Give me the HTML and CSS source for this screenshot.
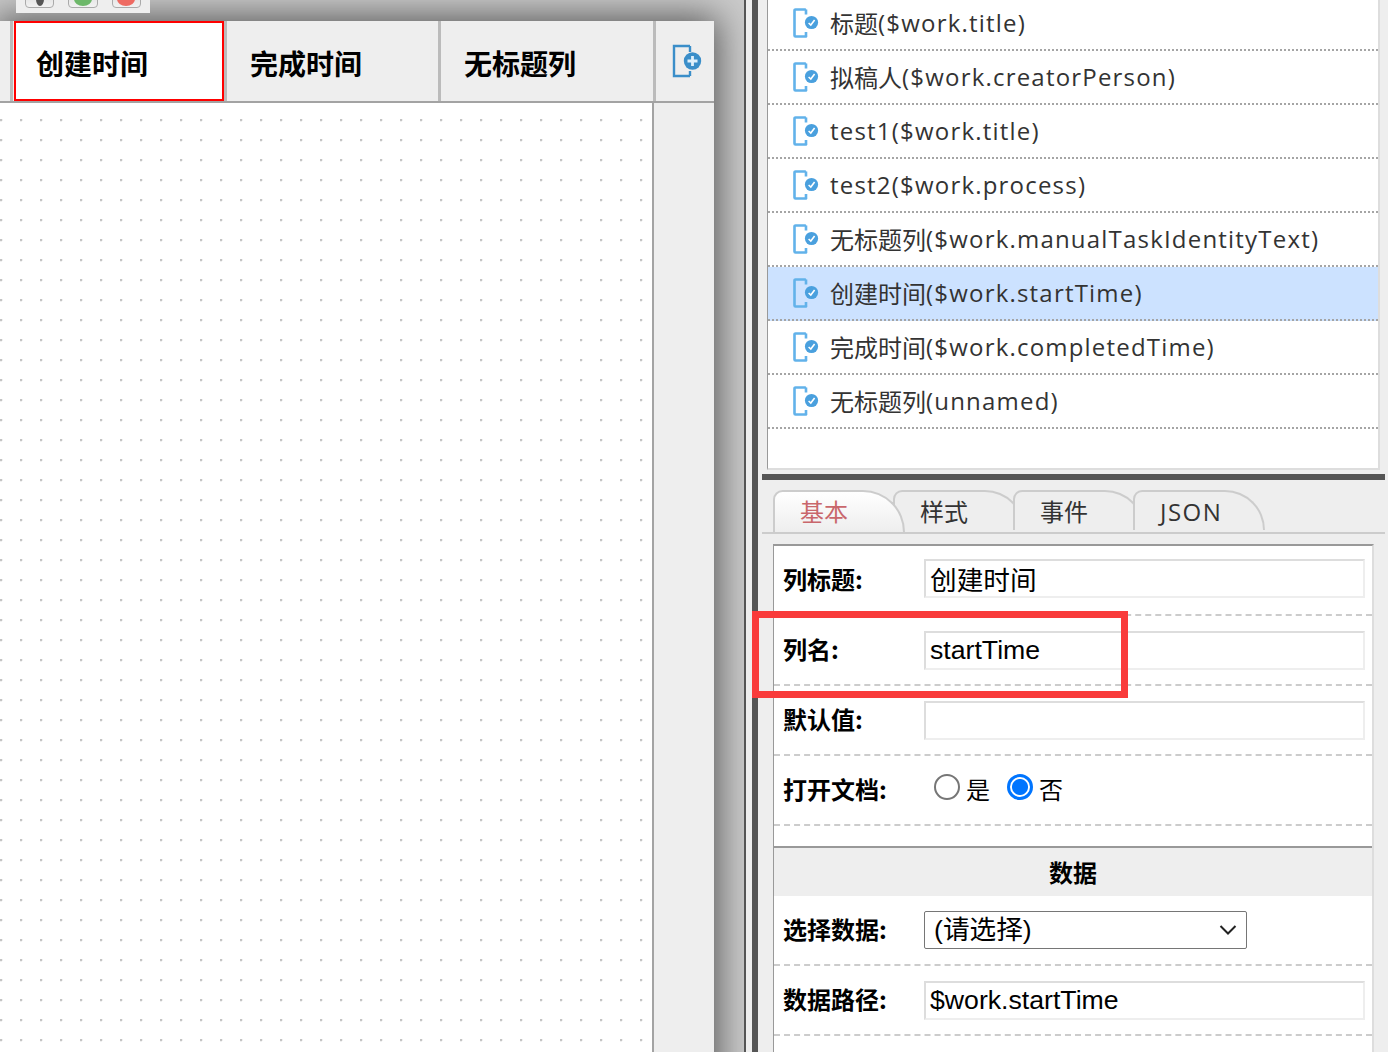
FILE: index.html
```html
<!DOCTYPE html>
<html lang="zh">
<head>
<meta charset="utf-8">
<title>视图设计</title>
<link rel="stylesheet" href="styles.css">
</head>
<body>
<svg class="defs" width="0" height="0" aria-hidden="true">
  <symbol id="doc" viewBox="0 0 27 30">
    <path d="M12 1.5H2.5a1 1 0 0 0-1 1v25a1 1 0 0 0 1 1H13" fill="none" stroke="#62b2ea" stroke-width="2.6" stroke-linecap="round"/>
    <path d="M13 1.5v5M13 24v4.5" fill="none" stroke="#62b2ea" stroke-width="2.6"/>
    <circle cx="18.5" cy="14.5" r="6.6" fill="#4aa0de"/>
    <path d="M15.6 15l2.2 2 3.8-5" fill="none" stroke="#fff" stroke-width="1.6"/>
  </symbol>
</svg>
<div class="app">
  <section class="stage">
    <div class="toolbar">
      <span class="tool"><i class="dot dot-dark"></i></span>
      <span class="tool"><i class="dot dot-green"></i></span>
      <span class="tool"><i class="dot dot-red"></i></span>
    </div>
    <div class="sheet">
      <div class="columns">
        <div class="column-stub"></div>
        <div class="column column-active">创建时间</div>
        <div class="column column-second">完成时间</div>
        <div class="column column-third">无标题列</div>
        <div class="column-add">
          <svg width="32" height="34" viewBox="0 0 32 34" aria-hidden="true">
            <path d="M18 2H2v30h16M18 2v6M18 27v5" fill="none" stroke="#3a8ec9" stroke-width="2.4"/>
            <circle cx="20.500" cy="17" r="8.700" fill="#3a8ec9"/>
            <path d="M15.500 17h10M20.500 12v10" stroke="#dff0fb" stroke-width="2.800"/>
          </svg>
        </div>
      </div>
      <div class="canvas-row">
        <div class="canvas"></div>
        <div class="canvas-side"></div>
      </div>
    </div>
  </section>
  <div class="rule"></div>
  <aside class="side">
    <ul class="tree">
      <li class="tree-item"><svg class="doc"><use href="#doc"/></svg>标题<span class="path">($work.title)</span></li>
      <li class="tree-item"><svg class="doc"><use href="#doc"/></svg>拟稿人<span class="path">($work.creatorPerson)</span></li>
      <li class="tree-item"><svg class="doc"><use href="#doc"/></svg><span class="path">test1($work.title)</span></li>
      <li class="tree-item"><svg class="doc"><use href="#doc"/></svg><span class="path">test2($work.process)</span></li>
      <li class="tree-item"><svg class="doc"><use href="#doc"/></svg>无标题列<span class="path">($work.manualTaskIdentityText)</span></li>
      <li class="tree-item tree-item-selected"><svg class="doc"><use href="#doc"/></svg>创建时间<span class="path">($work.startTime)</span></li>
      <li class="tree-item"><svg class="doc"><use href="#doc"/></svg>完成时间<span class="path">($work.completedTime)</span></li>
      <li class="tree-item"><svg class="doc"><use href="#doc"/></svg>无标题列<span class="path">(unnamed)</span></li>
    </ul>
    <div class="hbar"></div>
    <div class="tabs">
      <div class="tab tab-active">基本</div>
      <div class="tab">样式</div>
      <div class="tab tab-front">事件</div>
      <div class="tab tab-last">JSON</div>
    </div>
    <div class="props">
      <div class="prop prop-first"><label class="prop-label">列标题:</label><div class="field field-cjk">创建时间</div></div>
      <div class="prop"><label class="prop-label">列名:</label><div class="field">startTime</div></div>
      <div class="prop"><label class="prop-label">默认值:</label><div class="field"></div></div>
      <div class="prop"><label class="prop-label">打开文档:</label>
        <div class="radios">
          <input class="radio" type="radio" name="open"><span class="radio-text">是</span>
          <input class="radio radio-second" type="radio" name="open" checked><span class="radio-text">否</span>
        </div>
      </div>
      <div class="prop-gap"></div>
      <div class="prop-head">数据</div>
      <div class="prop"><label class="prop-label">选择数据:</label>
        <div class="select-wrap">
          <select class="select"><option>(请选择)</option></select>
          <svg class="chevron" width="18" height="12" viewBox="0 0 18 12" aria-hidden="true"><path d="M1.500 2l7.500 7.500L16.500 2" fill="none" stroke="#222" stroke-width="2"/></svg>
        </div>
      </div>
      <div class="prop"><label class="prop-label">数据路径:</label><div class="field">$work.startTime</div></div>
    </div>
    <div class="highlight"></div>
  </aside>
</div>
</body>
</html>
```
FILE: styles.css
```css
html, body {
  margin: 0;
  padding: 0;
  height: 100%;
  overflow: hidden;
  background: #eee;
}
body {
  font-family: "Liberation Sans", "Noto Sans CJK SC", sans-serif;
  color: #000;
}
.defs { position: absolute; }
.app {
  display: flex;
  width: 1388px;
  height: 1052px;
  overflow: hidden;
  position: relative;
}

/* left design area */
.stage {
  position: relative;
  flex: 0 0 744px;
  box-sizing: border-box;
  padding-top: 21px;
  background: #cbcbcb;
  overflow: hidden;
}
.toolbar {
  position: absolute;
  left: 16px;
  top: -8px;
  width: 134px;
  height: 21px;
  box-sizing: border-box;
  padding: 0 9px;
  display: flex;
  gap: 14px;
  background: #eee;
  z-index: 2;
}
.tool {
  width: 30px;
  height: 16px;
  box-sizing: border-box;
  border: 1px solid #aaa;
  border-radius: 4px;
  background: linear-gradient(#ddd, #f2f2f2);
  display: flex;
  justify-content: center;
  align-items: flex-end;
}
.dot { width: 18px; height: 14px; border-radius: 50%; margin-bottom: 1px; }
.dot-dark { width: 8px; background: #555; }
.dot-green { background: #6db86a; }
.dot-red { background: #ee6a62; }
.sheet {
  width: 714px;
  height: 1100px;
  background: #eee;
  box-shadow: 0 0 34px 4px #555;
}
.columns {
  display: flex;
  height: 82px;
  box-sizing: border-box;
  border-bottom: 2px solid #a3a3a3;
  background: #eee;
}
.column-stub {
  width: 10px;
  border-right: 3px solid #bbb;
  margin-right: 1px;
}
.column {
  box-sizing: border-box;
  padding: 4px 0 0 23px;
  display: flex;
  align-items: center;
  font: bold 28px "Noto Sans CJK SC", sans-serif;
  border-right: 3px solid #bbb;
}
.column-second { flex: 0 0 214px; }
.column-third { flex: 0 0 215px; }
.column-active {
  flex: 0 0 210px;
  padding-left: 20px;
  background: #fff;
  border: 2px solid #f00;
  margin-right: 3px;
  position: relative;
}
.column-active::after {
  content: "";
  position: absolute;
  right: -5px;
  top: -2px;
  bottom: -2px;
  width: 3px;
  background: #bbb;
}
.column-add {
  flex: 1;
  display: flex;
  align-items: center;
  padding: 0 0 0 16px;
}
.canvas-row { display: flex; height: 1000px; }
.canvas {
  width: 652px;
  background-color: #fff;
  background-image: radial-gradient(circle at 1px 1px, #c4c4c4 0, #c4c4c4 1.200px, transparent 1.700px);
  background-size: 20px 20px;
  background-position: 0 16px;
  border-right: 2px solid #a3a3a3;
}
.canvas-side { flex: 1; background: #eee; }

.rule { flex: 0 0 2px; background: #555; margin-right: 6px; }

/* right side panel */
.side {
  position: relative;
  flex: 1;
  box-sizing: border-box;
  border-left: 6px solid #555;
  background: #eee;
  padding: 0 4px;
}
.tree {
  list-style: none;
  margin: -3px 5px 0 5px;
  padding: 0;
  height: 473px;
  box-sizing: border-box;
  background: #fff;
  border-left: 1px solid #999;
  border-right: 2px solid #ddd;
  border-bottom: 2px solid #ddd;
  width: 613px;
}
.tree-item {
  height: 54px;
  box-sizing: border-box;
  padding-left: 25px;
  border-bottom: 2px dotted #a5a5a5;
  display: flex;
  align-items: center;
  font: 24px/1 "Noto Sans CJK SC", sans-serif;
  color: #333;
  white-space: nowrap;
}
.path {
  font-family: "Open Sans", "Noto Sans CJK SC", sans-serif;
  letter-spacing: 1.200px;
}
.tree-item-selected { background: #cce2ff; }
.doc { width: 27px; height: 30px; margin-right: 10px; flex: none; }
.hbar { height: 6px; background: #555; margin-top: 4px; }
.tabs {
  display: flex;
  height: 54px;
  box-sizing: border-box;
  padding: 10px 0 0 11px;
  border-bottom: 2px solid #ccc;
}
.tab {
  position: relative;
  flex: 0 0 132px;
  height: 40px;
  margin-right: -12px;
  box-sizing: border-box;
  padding-left: 25px;
  border: 2px solid #ccc;
  border-bottom: 0;
  border-radius: 10px 44px 0 0;
  background: #eee;
  font: 24px/40px "Open Sans", "Noto Sans CJK SC", sans-serif;
  color: #333;
}
.tab-active {
  height: 42px;
  z-index: 2;
  color: #c9676c;
  background: linear-gradient(#fff, #eee);
}
.tab-front { z-index: 1; }
.tab-last { z-index: 2; letter-spacing: 1.500px; }
.props {
  margin: 10px 0 0 11px;
  width: 601px;
  box-sizing: border-box;
  background: #fff;
  border-top: 2px solid #999;
  border-left: 1px solid #999;
  border-right: 2px solid #ddd;
  height: 600px;
}
.prop {
  display: flex;
  align-items: center;
  height: 70px;
  box-sizing: border-box;
  padding-left: 9px;
  border-bottom: 2px dashed #ccc;
}
.prop-first { padding-bottom: 3px; }
.prop-label {
  flex: 0 0 141px;
  box-sizing: border-box;
  padding-bottom: 4px;
  font: bold 24px "Noto Sans CJK SC", sans-serif;
}
.prop-first .prop-label { padding: 0; }
.field {
  width: 441px;
  height: 39px;
  box-sizing: border-box;
  border: 2px solid;
  border-color: #ddd #eee #eee #ddd;
  padding-left: 4px;
  font: 26.670px/35px "Liberation Sans", "Noto Sans CJK SC", sans-serif;
  color: #000;
  background: #fff;
}
.field-cjk { line-height: 41px; }
.radios { display: flex; align-items: center; padding: 0 0 4px 10px; }
.radio {
  appearance: none;
  width: 26px;
  height: 26px;
  box-sizing: border-box;
  margin: 0 6px 2px 0;
  border: 2px solid #767676;
  border-radius: 50%;
  background: #fff;
}
.radio:checked {
  border: 3px solid #0075ff;
  background: radial-gradient(circle, #0075ff 0, #0075ff 7.500px, #fff 8.500px);
}
.radio-second { margin-left: 17px; }
.radio-text { font: 24px "Noto Sans CJK SC", sans-serif; }
.prop-gap { height: 20px; }
.prop-head {
  height: 50px;
  box-sizing: border-box;
  border-top: 2px solid #999;
  background: #eee;
  text-align: center;
  font: bold 24px/48px "Noto Sans CJK SC", sans-serif;
}
.select-wrap { position: relative; width: 323px; height: 38px; }
.select {
  appearance: none;
  display: block;
  width: 100%;
  height: 100%;
  box-sizing: border-box;
  border: 1px solid #767676;
  border-radius: 2px;
  background-color: #fff;
  padding-left: 9px;
  font: 26.670px "Liberation Sans", "Noto Sans CJK SC", sans-serif;
  color: #000;
}
.chevron {
  position: absolute;
  right: 10px;
  top: 13px;
  pointer-events: none;
}
.highlight {
  position: absolute;
  left: -6px;
  top: 611px;
  width: 376px;
  height: 87px;
  box-sizing: border-box;
  border: 7px solid #f93b3b;
  pointer-events: none;
}
```
